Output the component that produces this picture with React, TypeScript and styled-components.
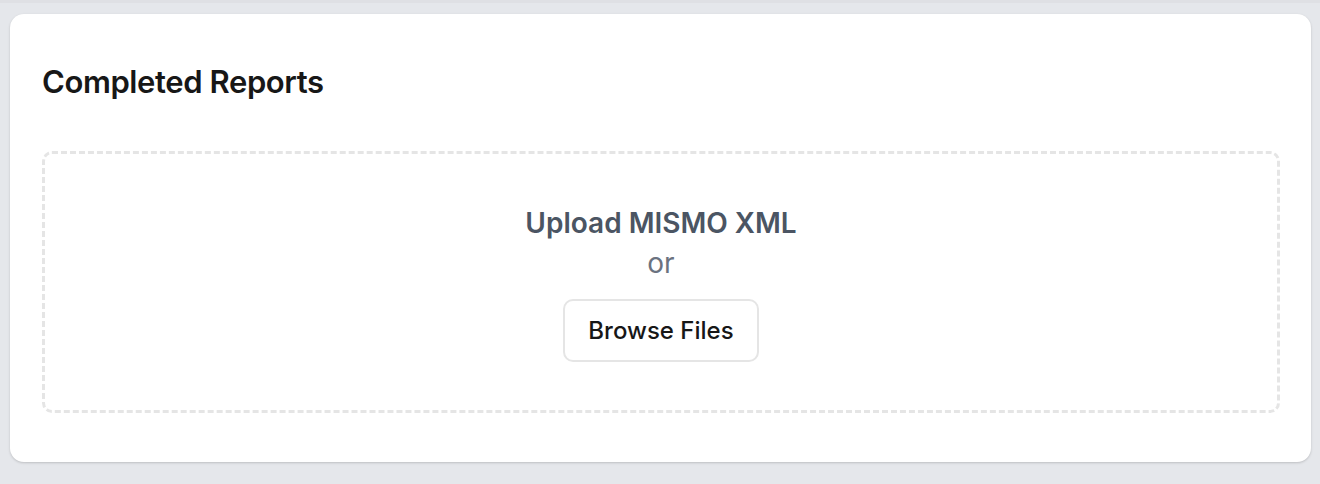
import React from 'react'
import styled, { createGlobalStyle } from 'styled-components'

const GlobalStyle = createGlobalStyle`
	html, body {
		margin: 0;
		padding: 0;
		background: #e5e7eb;
		font-family: Inter, 'Noto Sans', sans-serif;
	}
`

const Page = styled.div`
	display: flex;
	flex-direction: column;
	padding: 0 9px 0 10px;
	height: 484px;
	box-sizing: border-box;
`

const PrevCardEdge = styled.div`
	height: 3px;
	margin: 0 -10px;
	background: #dfe0e4;
`

const Card = styled.section`
	margin-top: 11px;
	background: #ffffff;
	border-radius: 14px;
	box-shadow: 0 1px 3px rgba(0, 0, 0, 0.12), 0 1px 2px rgba(0, 0, 0, 0.06);
	padding: 48px 31px 49px 32px;
	display: flex;
	flex-direction: column;
`

const Title = styled.h2`
	margin: 0 0 49px;
	font-size: 31px;
	line-height: 40px;
	font-weight: 600;
	color: #171717;
	letter-spacing: -0.4px;
`

const DropZone = styled.div`
	height: 262px;
	box-sizing: border-box;
	border: 3px dashed #e5e5e5;
	border-radius: 10px;
	display: flex;
	flex-direction: column;
	align-items: center;
	justify-content: center;
`

const Prompt = styled.div`
	font-size: 28px;
	line-height: 40px;
	font-weight: 600;
	color: #4b5563;
`

const Or = styled.div`
	font-size: 28px;
	line-height: 40px;
	color: #6b7280;
	margin-bottom: 16px;
`

const BrowseButton = styled.button`
	font-family: inherit;
	font-size: 24px;
	font-weight: 500;
	color: #171717;
	background: #ffffff;
	border: 2px solid #e5e5e5;
	border-radius: 10px;
	width: 196px;
	height: 63px;
	cursor: pointer;
`

export default function App() {
	return (
		<>
			<GlobalStyle />
			<Page>
				<PrevCardEdge />
				<Card>
					<Title>Completed Reports</Title>
					<DropZone>
						<Prompt>Upload MISMO XML</Prompt>
						<Or>or</Or>
						<BrowseButton>Browse Files</BrowseButton>
					</DropZone>
				</Card>
			</Page>
		</>
	)
}
